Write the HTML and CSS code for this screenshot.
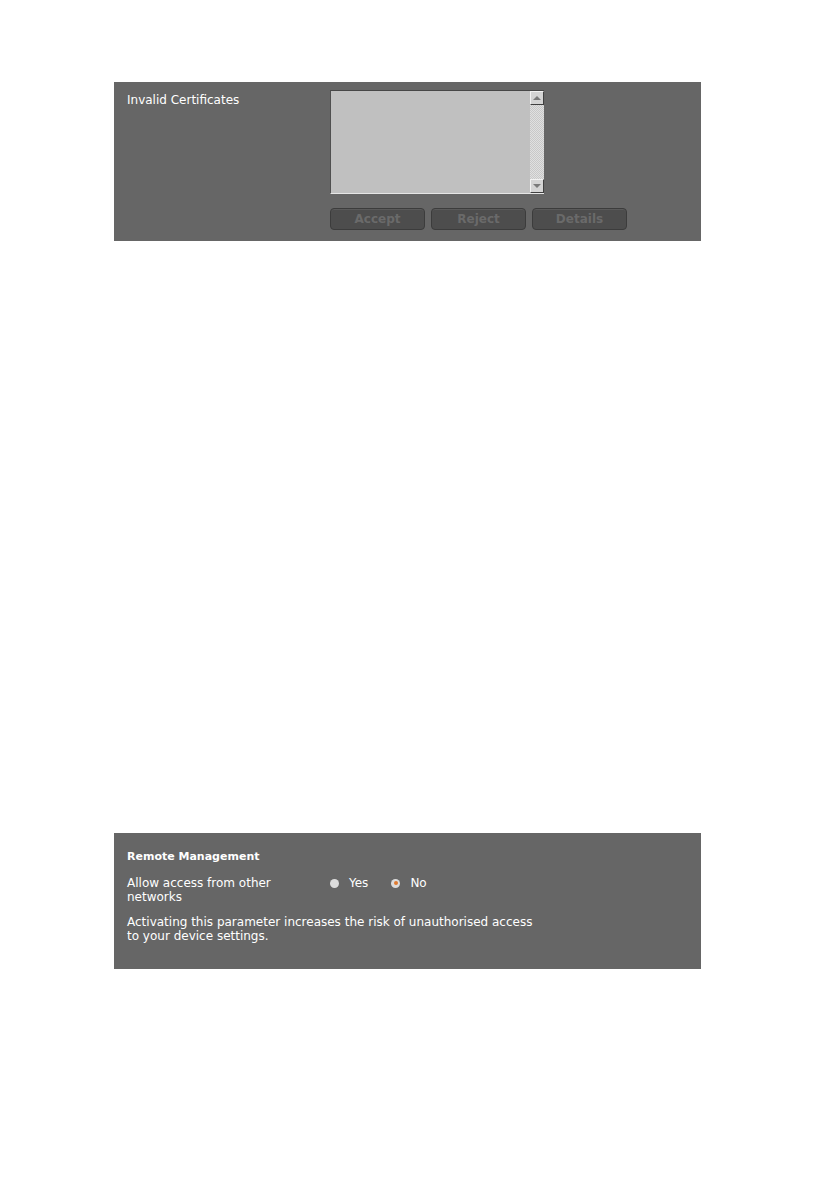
FILE: index.html
```html
<!DOCTYPE html>
<html>
<head>
<meta charset="utf-8">
<link rel="stylesheet" href="styles.css">
</head>
<body>
<div class="page">
  <section class="panel panel-certs">
    <div class="row">
      <div class="label">Invalid Certificates</div>
      <div class="control">
        <div class="listbox">
          <div class="list-area"></div>
          <div class="scrollbar">
            <div class="sb-btn sb-up"><span class="tri-up"></span></div>
            <div class="sb-track"></div>
            <div class="sb-btn sb-down"><span class="tri-down"></span></div>
          </div>
        </div>
        <div class="buttons">
          <button class="btn">Accept</button>
          <button class="btn">Reject</button>
          <button class="btn">Details</button>
        </div>
      </div>
    </div>
  </section>

  <section class="panel panel-remote">
    <div class="heading">Remote Management</div>
    <div class="row">
      <div class="label">Allow access from other<br>networks</div>
      <div class="radios">
        <span class="radio"><span class="dot"></span>Yes</span>
        <span class="radio"><span class="dot checked"></span>No</span>
      </div>
    </div>
    <p class="note">Activating this parameter increases the risk of unauthorised access<br>to your device settings.</p>
  </section>
</div>
</body>
</html>
```

FILE: styles.css
```css
html, body {
  margin: 0;
  padding: 0;
  background: #ffffff;
}
body {
  font-family: "DejaVu Sans", sans-serif;
  font-size: 12px;
  color: #ffffff;
}
.page {
  padding-top: 82px;
  padding-left: 114px;
  width: 587px;
}
.panel {
  background: #666666;
  box-sizing: border-box;
}
.panel-certs {
  height: 159px;
  padding: 8px 0 0 13px;
}
.panel-certs .row {
  display: flex;
}
.panel-certs .label {
  width: 203px;
  padding-top: 3px;
  line-height: 15px;
}
.listbox {
  display: flex;
  width: 214px;
  height: 104px;
  box-sizing: border-box;
  border: 1px solid #474747;
  border-right: none;
  border-bottom: 1px solid #e6e6e6;
  border-left: 1px solid #505050;
}
.list-area {
  flex: 1;
  background: #c0c0c0;
}
.scrollbar {
  width: 14px;
  display: flex;
  flex-direction: column;
  background-color: #e0e0e0;
  background-image:
    linear-gradient(45deg, #c8c8c8 25%, transparent 25%, transparent 75%, #c8c8c8 75%),
    linear-gradient(45deg, #c8c8c8 25%, transparent 25%, transparent 75%, #c8c8c8 75%);
  background-size: 2px 2px;
  background-position: 0 0, 1px 1px;
}
.sb-btn {
  height: 14px;
  box-sizing: border-box;
  background: #d4d4d4;
  border: 1px solid;
  border-color: #f2f2f2 #404040 #404040 #f2f2f2;
  display: flex;
  align-items: center;
  justify-content: center;
}
.sb-track {
  flex: 1;
}
.tri-up {
  width: 0;
  height: 0;
  border-left: 4px solid transparent;
  border-right: 4px solid transparent;
  border-bottom: 4px solid #7a7a7a;
}
.tri-down {
  width: 0;
  height: 0;
  border-left: 4px solid transparent;
  border-right: 4px solid transparent;
  border-top: 4px solid #7a7a7a;
}
.buttons {
  display: flex;
  gap: 6px;
  margin-top: 14px;
}
.btn {
  width: 95px;
  height: 22px;
  margin: 0;
  padding: 0;
  box-sizing: border-box;
  background: #4d4d4d;
  border: 1px solid #3c3c3c;
  border-radius: 4px;
  box-shadow: inset 0 1px 0 #5a5a5a;
  color: #6a6a6a;
  font-family: "DejaVu Sans", sans-serif;
  font-weight: bold;
  font-size: 12px;
}
.panel-remote {
  margin-top: 592px;
  height: 136px;
  padding: 17px 0 0 13px;
}
.heading {
  font-weight: bold;
  font-size: 11px;
  line-height: 14px;
}
.panel-remote .row {
  display: flex;
  align-items: flex-start;
  margin-top: 12px;
}
.panel-remote .label {
  width: 203px;
  line-height: 14px;
}
.radios {
  display: flex;
  gap: 23px;
  line-height: 14px;
}
.radio {
  display: flex;
  align-items: center;
}
.dot {
  width: 9px;
  height: 9px;
  border-radius: 50%;
  background: #dcdcdc;
  margin: 0 10px 0 0;
  display: inline-flex;
  align-items: center;
  justify-content: center;
}
.dot.checked::after {
  content: "";
  width: 4px;
  height: 4px;
  border-radius: 50%;
  background: #e07a30;
}
.note {
  margin: 11px 0 0 0;
  line-height: 14px;
}
```
